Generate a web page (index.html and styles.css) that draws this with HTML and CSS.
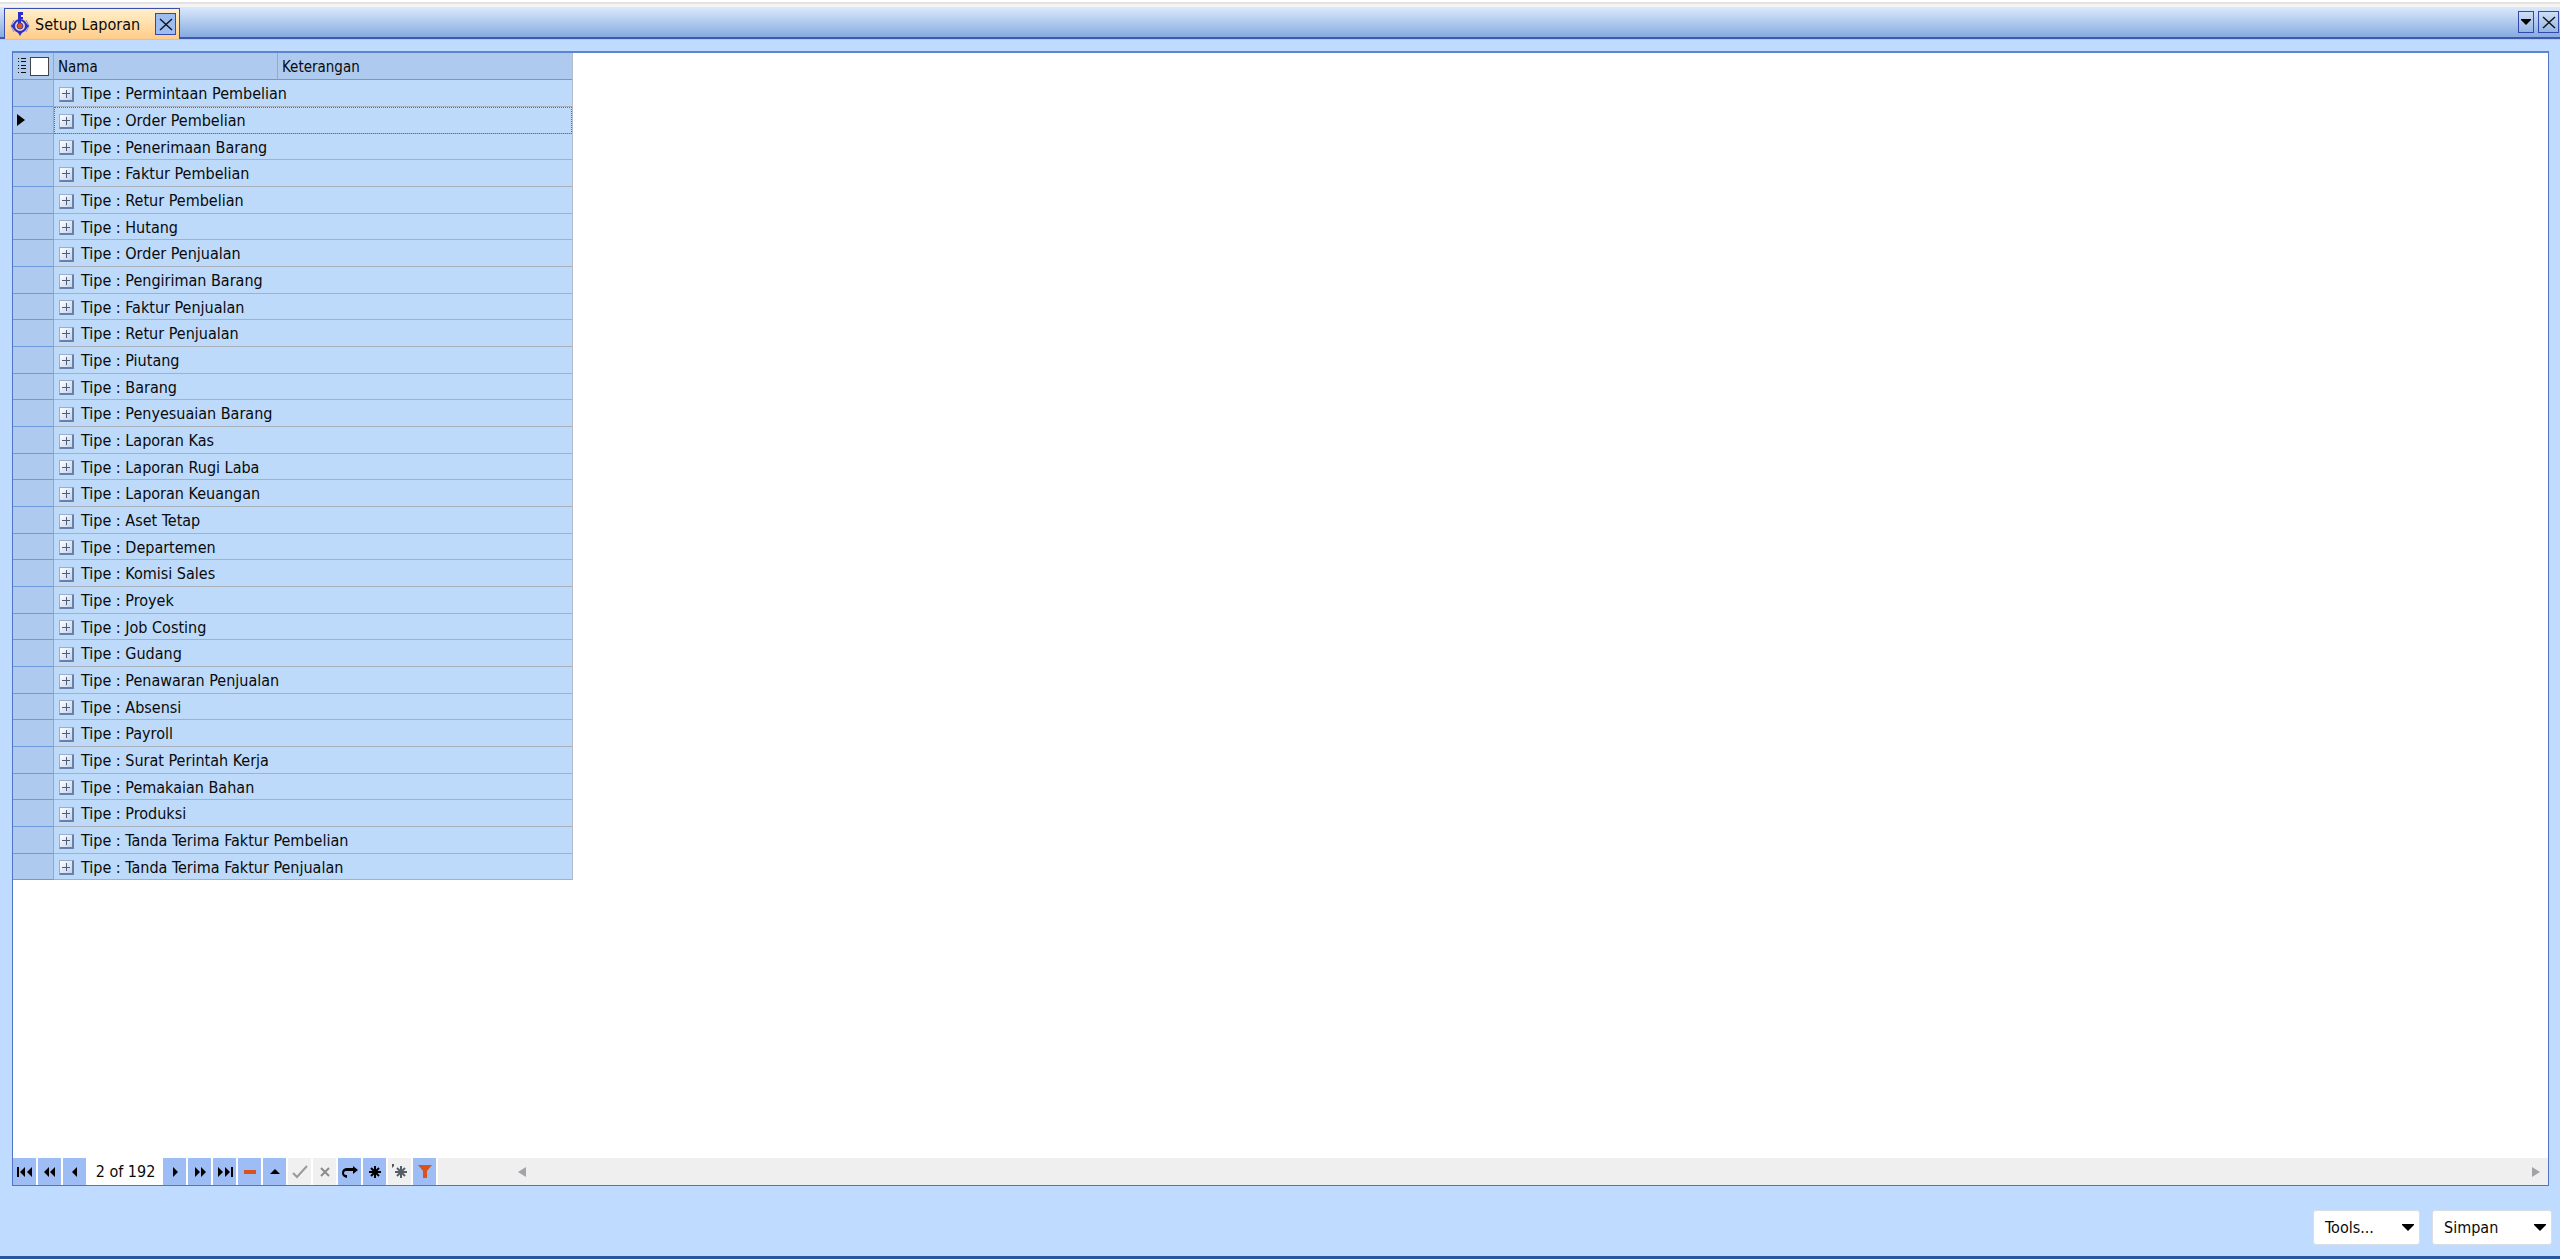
FILE: index.html
```html
<!DOCTYPE html>
<html lang="id">
<head>
  <meta charset="UTF-8">
  <meta name="viewport" content="width=device-width, initial-scale=1.0">
  <title>Setup Laporan</title>
  <link rel="stylesheet" href="styles.css">
  <script src="script.js" defer></script>
</head>
<body>
  <header class="tabbar">
    <div class="tab">
      <svg class="tab-icon" width="20" height="24" viewBox="0 0 20 24">
        <path d="M4 8L1 14l3 6M16 8l3 6-3 6" fill="none" stroke="#8b8bd0" stroke-width="1"/>
        <circle cx="10" cy="14" r="6" fill="#e9d9c0" stroke="#2b2fcb" stroke-width="2"/>
        <path d="M1 14l4-4v8zM19 14l-4-4v8zM10 24l-3-5h6z" fill="#2b2fcb"/>
        <path d="M8 0h5v3h-2v2h2v2h-2v4H8z" fill="#2b2fcb"/>
        <circle cx="10" cy="14" r="3" fill="#e0521e" stroke="#4a3fb0" stroke-width="1"/>
      </svg>
      <span class="tab-title">Setup Laporan</span>
      <button class="box-button tab-close" aria-label="Tutup tab">
        <svg width="14" height="14" viewBox="0 0 14 14"><path d="M1 2l12 11M13 2L1 13" stroke="#111" stroke-width="1.4"/></svg>
      </button>
    </div>
    <div class="tab-tools">
      <button class="box-button narrow" aria-label="Daftar tab">
        <svg width="10" height="6" viewBox="0 0 10 6"><path d="M0 0h10v1L5 6 0 1z" fill="#000"/></svg>
      </button>
      <button class="box-button" aria-label="Tutup">
        <svg width="14" height="14" viewBox="0 0 14 14"><path d="M1 2l12 11M13 2L1 13" stroke="#111" stroke-width="1.4"/></svg>
      </button>
    </div>
  </header>

  <main class="panel">
    <div class="grid">
      <div class="grid-body">
        <table class="report-table">
          <colgroup>
            <col class="col-indicator">
            <col class="col-name">
            <col class="col-note">
          </colgroup>
          <thead>
            <tr>
              <th class="indicator">
                <div class="indicator-tools">
                  <svg width="10" height="16" viewBox="0 0 10 16" shape-rendering="crispEdges"><path d="M1 1h1M4 1h5M1 4h1M4 4h5M1 8h1M4 8h5M1 11h1M4 11h5M1 15h1M4 15h5" transform="translate(0 -.5)" stroke="#111"/></svg>
                  <input type="checkbox" class="check-all" aria-label="Pilih semua">
                </div>
              </th>
              <th>Nama</th>
              <th class="note">Keterangan</th>
            </tr>
          </thead>
          <tbody id="rows"></tbody>
        </table>
      </div>

      <div class="navigator">
        <button class="nav" aria-label="Pertama"><svg width="16" height="12" viewBox="0 0 16 12"><path d="M0 1h2v10H0zM8 1v10L3 6zM15 1v10l-5-5z"/></svg></button>
        <button class="nav" aria-label="Halaman sebelumnya"><svg width="16" height="12" viewBox="0 0 16 12"><path d="M7 1v10L2 6zM13 1v10L8 6z"/></svg></button>
        <button class="nav" aria-label="Sebelumnya"><svg width="16" height="12" viewBox="0 0 16 12"><path d="M10 1v10L5 6z"/></svg></button>
        <span class="position">2 of 192</span>
        <button class="nav" aria-label="Berikutnya"><svg width="16" height="12" viewBox="0 0 16 12"><path d="M6 1v10l5-5z"/></svg></button>
        <button class="nav" aria-label="Halaman berikutnya"><svg width="16" height="12" viewBox="0 0 16 12"><path d="M3 1v10l5-5zM9 1v10l5-5z"/></svg></button>
        <button class="nav" aria-label="Terakhir"><svg width="16" height="12" viewBox="0 0 16 12"><path d="M1 1v10l5-5zM8 1v10l5-5zM14 1h2v10h-2z"/></svg></button>
        <button class="nav" aria-label="Hapus"><svg width="16" height="12" viewBox="0 0 16 12"><path d="M2 4h12v4H2z" fill="#d9531e"/></svg></button>
        <button class="nav" aria-label="Ubah"><svg width="16" height="12" viewBox="0 0 16 12"><path d="M3 8h10L8 3z"/></svg></button>
        <button class="nav" aria-label="Terapkan" disabled><svg width="16" height="14" viewBox="0 0 16 14"><path d="M1 8l4 4L15 1" fill="none" stroke="#999" stroke-width="2"/></svg></button>
        <button class="nav" aria-label="Batal" disabled><svg width="16" height="12" viewBox="0 0 16 12"><path d="M4 2l8 8M12 2l-8 8" stroke="#8c8c8c" stroke-width="2"/></svg></button>
        <button class="nav" aria-label="Segarkan"><svg width="16" height="12" viewBox="0 0 16 12"><path d="M11 0l5 4-5 4V5H4q-2 0-2 2t3 2v3q-5-1-5-5t4-5h7z"/></svg></button>
        <button class="nav" aria-label="Tandai"><svg width="14" height="14" viewBox="0 0 14 14"><path d="M7 1v12M1 7h12M3 3l8 8M11 3l-8 8" stroke="#000" stroke-width="2"/></svg></button>
        <button class="nav" aria-label="Ke tanda" disabled><svg width="16" height="16" viewBox="0 0 16 16"><path d="M9 2v12M3 8h12M5 4l8 8M13 4l-8 8" stroke="#555e68" stroke-width="2"/><path d="M0 0h2v2L0 4z" fill="#555"/></svg></button>
        <button class="nav" aria-label="Saring"><svg width="16" height="14" viewBox="0 0 16 14"><path d="M1 0h14L10 6v7H6V6z" fill="#d9531e"/></svg></button>
        <div class="scrollbar">
          <svg width="8" height="10" viewBox="0 0 8 10"><path d="M8 0v10L0 5z" fill="#a0a4a9"/></svg>
          <svg width="8" height="10" viewBox="0 0 8 10"><path d="M0 0v10l8-5z" fill="#a0a4a9"/></svg>
        </div>
      </div>
    </div>
  </main>

  <footer class="actions">
    <button class="action tools" aria-haspopup="menu">Tools... <svg width="12" height="7" viewBox="0 0 12 7"><path d="M0 0h12v1L6 7 0 1z"/></svg></button>
    <button class="action save" aria-haspopup="menu">Simpan <svg width="12" height="7" viewBox="0 0 12 7"><path d="M0 0h12v1L6 7 0 1z"/></svg></button>
  </footer>
</body>
</html>
```

FILE: styles.css
```css
* {
  box-sizing: border-box;
}
body {
  margin: 0;
  min-height: 100vh;
  display: flex;
  flex-direction: column;
  background: #bfdbff;
  border-top: 2px solid #fff;
  border-bottom: 3px solid #2a569f;
  color: #0a0a0a;
  font-family: 'DejaVu Sans Condensed', 'DejaVu Sans', Tahoma, sans-serif;
  font-size: 16px;
}
button {
  font: inherit;
  color: inherit;
  padding: 0;
}
svg {
  display: block;
  flex: none;
}

/* Tab bar */
.tabbar {
  display: flex;
  justify-content: space-between;
  align-items: flex-end;
  height: 37px;
  border-top: 2px solid #e2e2e2;
  background: linear-gradient(#f4f4f4 3px, #dbe9fb 3px, #86abe0 33px);
  box-shadow: inset 0 -2px #4059ae, 0 1px #e8b9a5;
}
.tab {
  display: flex;
  align-items: center;
  gap: 5px;
  height: 31px;
  margin-left: 4px;
  padding: 0 3px 0 5px;
  border: 1px solid #3a4fb0;
  border-bottom: 0;
  background: linear-gradient(#fff0cb, #ffcc8a);
}
.tab-close {
  margin-left: 10px;
}
.tab-tools {
  display: flex;
  gap: 4px;
  padding: 0 1px 6px 0;
}
.box-button {
  display: flex;
  align-items: center;
  justify-content: center;
  width: 21px;
  height: 22px;
  border: 1px solid #3347ad;
  background: transparent;
}
.tab .box-button {
  background: #9dbcf3;
}
.box-button.narrow {
  width: 16px;
}

/* Grid */
.panel {
  flex: 1;
  display: flex;
  padding: 12px 11px 0 12px;
}
.grid {
  flex: 1;
  display: flex;
  flex-direction: column;
  border: 1px solid #4f75c4;
  border-top: 2px solid #5e84d0;
  background: #fff;
}
.grid-body {
  flex: 1;
}
.report-table {
  table-layout: fixed;
  width: 560px;
  border-collapse: separate;
  border-spacing: 0;
  border-right: 1px solid #b4bccb;
}
.col-indicator {
  width: 41px;
}
.col-name {
  width: 223px;
}
.report-table th,
.report-table td {
  height: 27px;
  padding: 2px 0 0;
  line-height: 20px;
  text-align: left;
  font-weight: normal;
}
.report-table tbody tr:nth-child(3n) td {
  height: 26px;
}
.report-table th {
  padding-left: 4px;
  border-bottom: 1px solid #6f97dc;
  background: #afcaef;
  font-size: 15px;
}
.report-table th.note {
  border-left: 1px solid #8aabdf;
}
.report-table td {
  border-bottom: 1px solid #a9b0ba;
  background: #bddafb;
}
.report-table .indicator {
  padding: 0 0 0 4px;
  border-right: 1px solid #86a8e4;
  border-bottom: 1px solid #7099dd;
  background: #afcaef;
}
.indicator-tools {
  display: flex;
  align-items: center;
  gap: 3px;
}
.check-all {
  appearance: none;
  width: 19px;
  height: 19px;
  margin: 0;
  border: 1px solid #444;
  background: #fff;
}
.report-table .current td:last-child {
  outline: 1px dotted #6f6f6f;
  outline-offset: -1px;
}
.group {
  display: flex;
  align-items: center;
  gap: 7px;
  padding-left: 5px;
  white-space: nowrap;
}
.expand {
  width: 15px;
  height: 15px;
  border: 1px solid #9badc9;
  border-right: 2px solid #6a7fa5;
  border-bottom: 2px solid #6a7fa5;
  border-radius: 1px;
  background:
    linear-gradient(#4d5d7c, #4d5d7c) center / 8px 1px no-repeat,
    linear-gradient(#4d5d7c, #4d5d7c) center / 1px 8px no-repeat,
    linear-gradient(135deg, #fff, #c5d3ea);
}

/* Navigator */
.navigator {
  display: flex;
  align-items: center;
  gap: 2px;
  height: 27px;
}
.nav {
  display: flex;
  align-items: center;
  justify-content: center;
  width: 23px;
  height: 27px;
  border: 0;
  background: #9fbdf5;
}
.nav:disabled {
  background: #f0f0f0;
}
.position {
  width: 73px;
  padding-left: 2px;
  text-align: center;
}
.scrollbar {
  flex: 1;
  display: flex;
  align-items: center;
  justify-content: space-between;
  height: 27px;
  padding: 0 8px 0 80px;
  background: #efefef;
}

/* Footer */
.actions {
  display: flex;
  justify-content: flex-end;
  gap: 12px;
  padding: 24px 8px 11px;
}
.action {
  display: flex;
  align-items: center;
  justify-content: space-between;
  height: 35px;
  padding: 0 5px 0 11px;
  border: 1px solid #d9dde4;
  border-radius: 3px;
  background: #fff;
}
.tools {
  width: 107px;
}
.save {
  width: 120px;
}
```

FILE: script.js
```javascript
const TYPES = [
  'Permintaan Pembelian',
  'Order Pembelian',
  'Penerimaan Barang',
  'Faktur Pembelian',
  'Retur Pembelian',
  'Hutang',
  'Order Penjualan',
  'Pengiriman Barang',
  'Faktur Penjualan',
  'Retur Penjualan',
  'Piutang',
  'Barang',
  'Penyesuaian Barang',
  'Laporan Kas',
  'Laporan Rugi Laba',
  'Laporan Keuangan',
  'Aset Tetap',
  'Departemen',
  'Komisi Sales',
  'Proyek',
  'Job Costing',
  'Gudang',
  'Penawaran Penjualan',
  'Absensi',
  'Payroll',
  'Surat Perintah Kerja',
  'Pemakaian Bahan',
  'Produksi',
  'Tanda Terima Faktur Pembelian',
  'Tanda Terima Faktur Penjualan',
];
const CURRENT = 1;
const MARKER = '<svg width="8" height="12" viewBox="0 0 8 12"><path d="M0 0l8 6-8 6z"/></svg>';

document.getElementById('rows').innerHTML = TYPES.map((type, i) => `
  <tr class="${i === CURRENT ? 'current' : ''}">
    <td class="indicator">${i === CURRENT ? MARKER : ''}</td>
    <td colspan="2">
      <div class="group">
        <button class="expand" aria-label="Buka ${type}"></button>
        <span>Tipe : ${type}</span>
      </div>
    </td>
  </tr>`).join('');
```
